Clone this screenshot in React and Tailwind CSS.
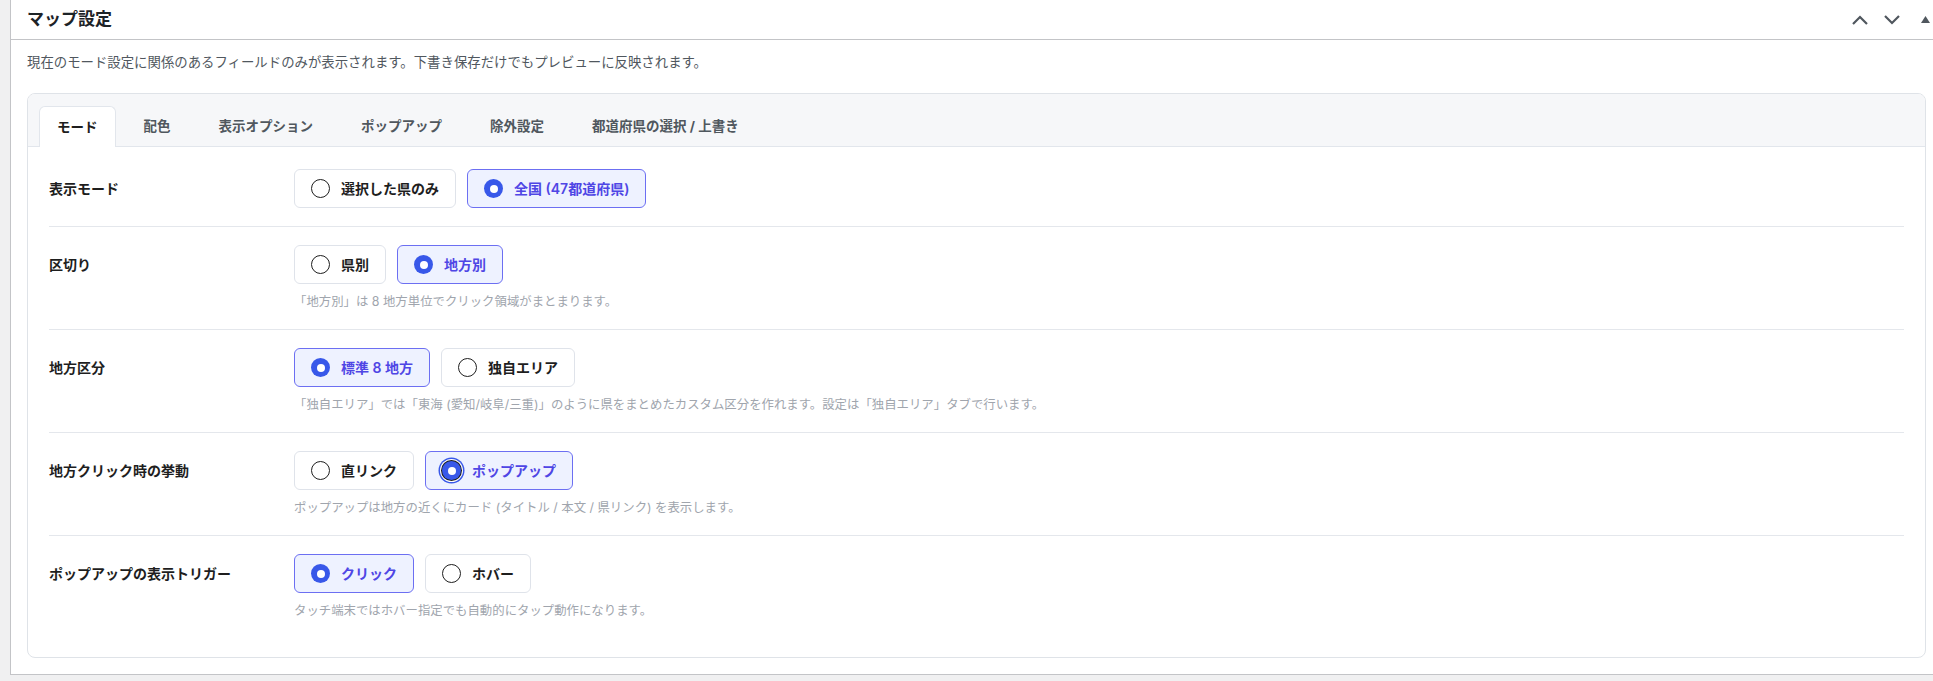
import { useState } from 'react';

const tabs = ['モード', '配色', '表示オプション', 'ポップアップ', '除外設定', '都道府県の選択 / 上書き'];

const rows = [
  {
    label: '表示モード',
    options: ['選択した県のみ', '全国 (47都道府県)'],
    value: 1,
  },
  {
    label: '区切り',
    options: ['県別', '地方別'],
    value: 1,
    help: '「地方別」は 8 地方単位でクリック領域がまとまります。',
  },
  {
    label: '地方区分',
    options: ['標準 8 地方', '独自エリア'],
    value: 0,
    help: '「独自エリア」では「東海 (愛知/岐阜/三重)」のように県をまとめたカスタム区分を作れます。設定は「独自エリア」タブで行います。',
  },
  {
    label: '地方クリック時の挙動',
    options: ['直リンク', 'ポップアップ'],
    value: 1,
    focused: true,
    help: 'ポップアップは地方の近くにカード (タイトル / 本文 / 県リンク) を表示します。',
  },
  {
    label: 'ポップアップの表示トリガー',
    options: ['クリック', 'ホバー'],
    value: 0,
    help: 'タッチ端末ではホバー指定でも自動的にタップ動作になります。',
  },
];

function RadioDot({ checked, focused }) {
  if (!checked) {
    return <span className="w-[19px] h-[19px] rounded-full border-[1.5px] border-[#1e1e1e] bg-white shrink-0" />;
  }
  return (
    <span
      className={`w-[19px] h-[19px] rounded-full bg-[#3858e9] flex items-center justify-center shrink-0 ${
        focused ? 'shadow-[0_0_0_1px_#1e1e1e,0_0_0_2px_#fff,0_0_0_3.5px_#3858e9]' : ''
      }`}
    >
      <span className="w-[8px] h-[8px] rounded-full bg-white" />
    </span>
  );
}

function RadioGroup({ options, value, focused, onChange }) {
  return (
    <div className="flex items-center gap-[11px]">
      {options.map((opt, i) => {
        const on = i === value;
        return (
          <button
            key={opt}
            onClick={() => onChange(i)}
            className={`h-[39px] px-4 flex items-center gap-[11px] rounded-[6px] border text-[14px] font-semibold ${
              on ? 'border-[#6c6ff2] bg-[#eef2ff] text-[#4f46e5]' : 'border-[#dfe3ea] bg-white text-[#1e1e1e]'
            }`}
          >
            <RadioDot checked={on} focused={on && focused} />
            <span>{opt}</span>
          </button>
        );
      })}
    </div>
  );
}

export default function App() {
  const [tab, setTab] = useState(0);
  const [values, setValues] = useState(rows.map(r => r.value));

  return (
    <div className="h-[681px] bg-[#f0f0f1] pl-[10px] font-['Inter','Noto_Sans_CJK_JP',sans-serif] overflow-hidden">
      <div className="bg-white border-l border-b border-[#c3c4c7]">
        {/* Header */}
        <div className="h-[40px] border-b border-[#c3c4c7] flex items-center justify-between pl-[16px] pr-[3px]">
          <h2 className="text-[17px] font-bold text-[#1d2327]">マップ設定</h2>
          <div className="flex items-center text-[#50575e]">
            <svg width="16" height="10" viewBox="0 0 16 10" fill="none" stroke="currentColor" strokeWidth="2.2">
              <polyline points="1,9 8,2 15,9" />
            </svg>
            <svg width="16" height="10" viewBox="0 0 16 10" fill="none" stroke="currentColor" strokeWidth="2.2" className="ml-[16px]">
              <polyline points="1,1 8,8 15,1" />
            </svg>
            <svg width="9" height="7" viewBox="0 0 9 7" fill="currentColor" className="ml-[21px]">
              <polygon points="4.5,0 9,7 0,7" />
            </svg>
          </div>
        </div>

        {/* Body */}
        <div className="pl-[16px] pr-[7px] pt-[12px] pb-[16px]">
          <p className="text-[13.4px] leading-[20px] text-[#50575e]">
            現在のモード設定に関係のあるフィールドのみが表示されます。下書き保存だけでもプレビューに反映されます。
          </p>

          <div className="mt-[21px] border border-[#dfe3e8] rounded-[8px] overflow-hidden">
            {/* Tabs */}
            <div className="bg-[#f6f7f9] pt-[12px] px-[11px] border-b border-[#e2e6ec] flex items-end gap-2">
              {tabs.map((t, i) => (
                <button
                  key={t}
                  onClick={() => setTab(i)}
                  className={
                    i === tab
                      ? 'h-[41px] -mb-px px-[17px] bg-white border border-b-0 border-[#e2e6ec] rounded-t-[6px] text-[13.5px] font-bold text-[#1e1e1e]'
                      : 'h-[40px] px-[20px] text-[13.5px] font-bold text-[#50575e]'
                  }
                >
                  {t}
                </button>
              ))}
            </div>

            {/* Fields */}
            <div className="px-[21px] pt-[4px] pb-[19px]">
              {rows.map((row, idx) => (
                <div
                  key={row.label}
                  className={`grid grid-cols-[245px_1fr] py-[18px] ${idx < rows.length - 1 ? 'border-b border-[#e4e7ec]' : ''}`}
                >
                  <div className="h-[39px] flex items-center text-[14px] font-semibold text-[#1e1e1e]">{row.label}</div>
                  <div>
                    <RadioGroup
                      options={row.options}
                      value={values[idx]}
                      focused={row.focused}
                      onChange={v => setValues(vals => vals.map((x, j) => (j === idx ? v : x)))}
                    />
                    {row.help && (
                      <p className="mt-[8px] text-[12.4px] leading-[19px] text-[#a0a5ad]">{row.help}</p>
                    )}
                  </div>
                </div>
              ))}
            </div>
          </div>
        </div>
      </div>
    </div>
  );
}
